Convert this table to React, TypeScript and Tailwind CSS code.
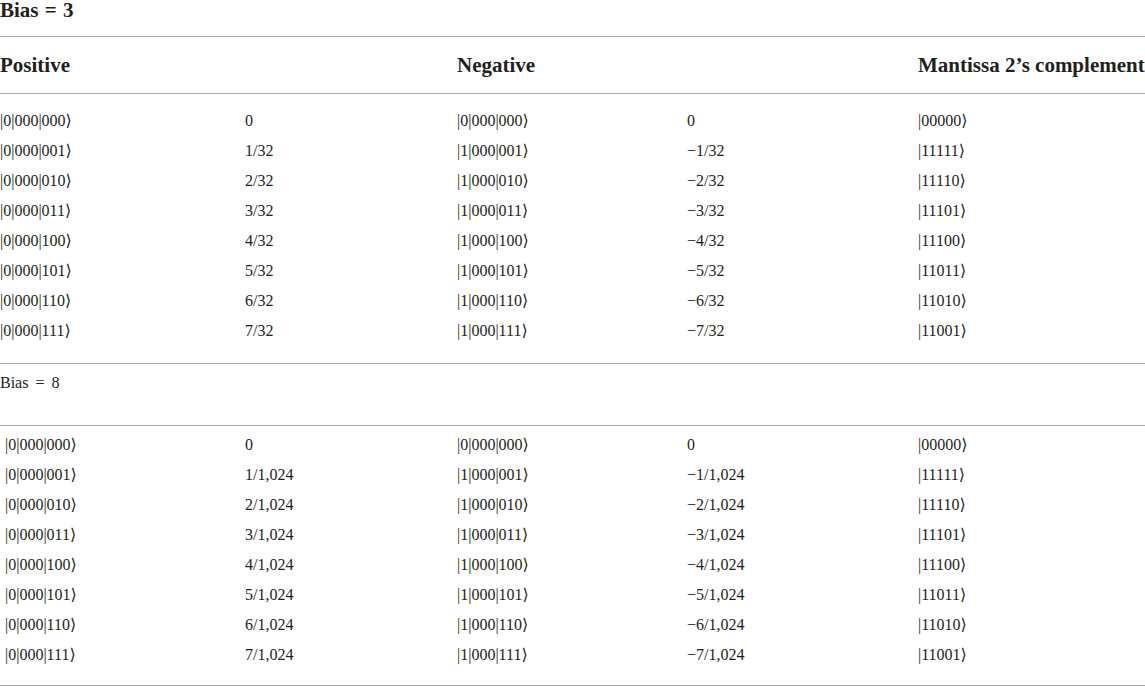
const bits = ["000", "001", "010", "011", "100", "101", "110", "111"];
const mant = ["00000", "11111", "11110", "11101", "11100", "11011", "11010", "11001"];

function Row({ i, denom, indent }: { i: number; denom: string; indent?: boolean }) {
  return (
    <div className="grid grid-cols-[245px_212px_230px_231px_1fr] h-[30px] items-center">
      <div className={indent ? "pl-[5px]" : ""}>|0|000|{bits[i]}⟩</div>
      <div>{i === 0 ? "0" : `${i}/${denom}`}</div>
      <div>|{i === 0 ? "0" : "1"}|000|{bits[i]}⟩</div>
      <div>{i === 0 ? "0" : `−${i}/${denom}`}</div>
      <div>|{mant[i]}⟩</div>
    </div>
  );
}

export default function App() {
  return (
    <div className="w-[1145px] h-[686px] bg-white text-[#231f20] font-['Liberation_Serif','DejaVu_Serif',serif] text-[16px] leading-5 overflow-hidden">
      <div className="h-[37px] border-b border-[#a8a8a8] font-bold text-[21px] leading-[20px] [word-spacing:1px]">
        Bias = 3
      </div>
      <div className="h-[57px] border-b border-[#a8a8a8] grid grid-cols-[245px_212px_230px_231px_1fr] items-center font-bold text-[21px]">
        <div>Positive</div>
        <div></div>
        <div>Negative</div>
        <div></div>
        <div className="whitespace-nowrap">Mantissa 2’s complement</div>
      </div>
      <div className="pt-[12px] pb-[17px] border-b border-[#a8a8a8]">
        {bits.map((_, i) => (
          <Row key={i} i={i} denom="32" />
        ))}
      </div>
      <div className="h-[62px] border-b border-[#a8a8a8] pt-[9px] [word-spacing:3px]">Bias = 8</div>
      <div className="pt-[4px] pb-[15px] border-b border-[#a8a8a8]">
        {bits.map((_, i) => (
          <Row key={i} i={i} denom="1,024" indent />
        ))}
      </div>
    </div>
  );
}
